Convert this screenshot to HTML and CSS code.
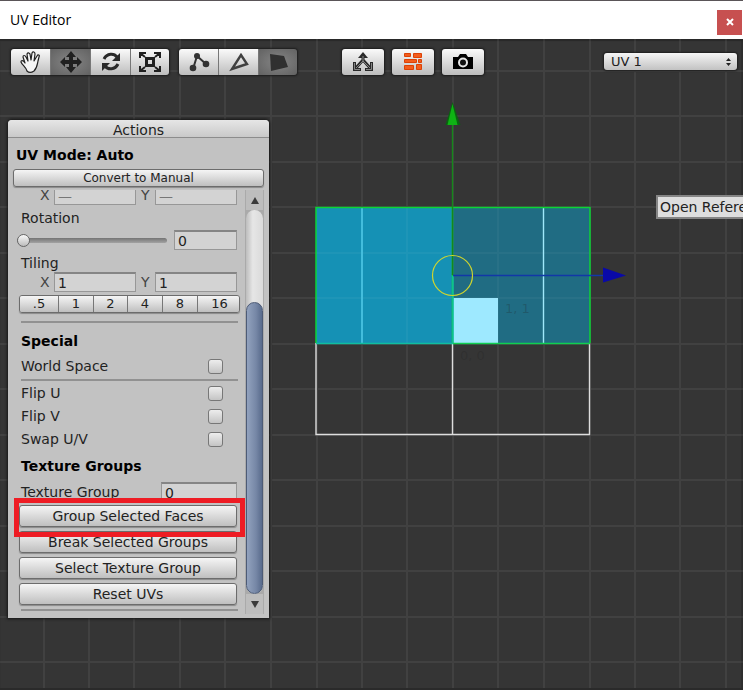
FILE: index.html
```html
<!DOCTYPE html>
<html lang="en">
<head>
<meta charset="utf-8">
<title>UV Editor</title>
<link rel="stylesheet" href="styles.css">
</head>
<body>
<header class="titlebar">
  <h1>UV Editor</h1>
  <button class="close" aria-label="Close"><svg width="8" height="8" viewBox="0 0 8 8"><path d="M1 1l6 6M7 1L1 7" stroke="#fff" stroke-width="2"/></svg></button>
</header>
<main class="workspace">
  <svg class="canvas" width="100%" height="100%" aria-hidden="true">
    <defs>
      <pattern id="grid" width="273" height="273" patternUnits="userSpaceOnUse">
        <path d="M44 0v273M89 0v273M134 0v273M180 0v273M225 0v273M271 0v273M0 71h273M0 116h273M0 162h273M0 207h273M0 253h273M0 25h273" stroke="#fff" stroke-opacity=".06" stroke-width="2"/>
      </pattern>
    </defs>
    <g transform="translate(0 -39)">
      <rect width="100%" height="200%" fill="url(#grid)"/>
      <rect x="316" y="207" width="136" height="136" fill="#1591b5"/>
      <rect x="452" y="207" width="138" height="136" fill="#206c83"/>
      <path d="M316 253h274M316 298h274M407 207v136M498 207v136" stroke="#fff" stroke-opacity=".04" stroke-width="2"/>
      <path d="M362 207v136" stroke="#43bddd" stroke-width="2"/>
      <path d="M543.500 207v136" stroke="#a0e8fb" stroke-width="1.400"/>
      <path d="M316 343v91.500h273.500V343M452.500 343v91" fill="none" stroke="#dedede" stroke-width="1.400"/>
      <rect x="453" y="298" width="45" height="45" fill="#9ee9ff"/>
      <path d="M452.500 343V207.500H316v135.500" fill="none" stroke="#0cd436" stroke-width="1.500"/>
      <path d="M452 207.500h138V343" fill="none" stroke="#0cd436" stroke-width="1.500"/>
      <path d="M316 343.500h137V276" fill="none" stroke="#10bea0" stroke-width="1.500"/>
      <path d="M453 343.500h137" stroke="#10cf50" stroke-width="1.500"/>
      <path d="M452.500 124v151" stroke="#16871b" stroke-width="1.400"/>
      <path d="M452.500 102l8 23h-15z" fill="#0a6410"/>
      <path d="M452.500 104l5 21h-10z" fill="#0eb414"/>
      <path d="M453 275.500h150" stroke="#1237a8" stroke-width="1.400"/>
      <path d="M603 267.500l23 8-23 7z" fill="#0909a8"/>
      <circle cx="452.500" cy="275.500" r="20" fill="none" stroke="#cfd52e" stroke-width="1.200"/>
      <g class="coords"><text x="505" y="313">1, 1</text><text x="460" y="360">0, 0</text></g>
    </g>
  </svg>
  <nav class="toolbar" aria-label="Tools">
    <div class="group">
      <button aria-label="Pan"><svg width="24" height="24" viewBox="0 0 24 24" fill="#f5f5f5" stroke="#222" stroke-width="1.200" stroke-linejoin="round" stroke-linecap="round"><path d="M8 21c-1-4-5-6-6-9 0-2 2-2 4 1L4 7c0-2 2-2 3 0l2 4-1-7c1-2 2-1 3 0l1 6 1-7c1-2 3-1 3 1l-1 7 3-5c1-2 3-1 2 1l-1 4c-1 5-1 7-4 10-3 2-5 2-7 0z"/></svg></button>
      <button class="on" aria-label="Move"><svg width="24" height="24" viewBox="0 0 24 24"><path d="M12 1l5 6h-3v3h4V7l5 5-5 5v-3h-4v3h3l-5 6-5-6h3v-3H6v3l-5-5 5-5v3h4V7H7z" fill="#202020"/></svg></button>
      <button aria-label="Rotate"><svg width="24" height="24" viewBox="0 0 24 24" fill="none" stroke="#292929" stroke-width="3"><path d="M5 9c3-6 10-6 13-2M19 14c-3 6-10 6-13 2"/><path d="M21 3v8h-8zM3 21v-8h8z" fill="#292929" stroke="none"/></svg></button>
      <button aria-label="Scale"><svg width="24" height="24" viewBox="0 0 24 24" fill="none" stroke="#202020" stroke-width="2"><path d="M8.500 8.500h7v7h-7z" stroke-width="3"/><path d="M2 8V3h6M16 3h6v5M22 16v5h-6M8 21H2v-5M2 3l5 4M22 3l-5 4M2 21l5-4M22 21l-5-4"/></svg></button>
    </div>
    <div class="group">
      <button aria-label="Vertex mode"><svg width="24" height="24" viewBox="0 0 24 24" fill="#333"><path d="M6 19L10 6l9 8" fill="none" stroke="#333" stroke-width="2"/><circle cx="10" cy="6" r="3"/><circle cx="6" cy="18" r="3.300"/><circle cx="19" cy="14" r="3.300"/></svg></button>
      <button aria-label="Edge mode"><svg width="24" height="24" viewBox="0 0 24 24" fill="none" stroke="#414141" stroke-width="2.400"><path d="M14 5l6 9-15 5z"/></svg></button>
      <button class="on" aria-label="Face mode"><svg width="24" height="24" viewBox="0 0 24 24"><path d="M4 4l14 2 4 11-17 4z" fill="#303030"/></svg></button>
    </div>
    <div class="actions">
      <button aria-label="Export UVs"><svg width="24" height="24" viewBox="0 0 24 24" fill="none"><g stroke="#2a2a2a" stroke-width="3"><path d="M12 5v6M12 10l-8 9M12 10l8 9"/><path d="M3.500 12v7.500H10M20.500 12v7.500H14"/></g><path d="M12 2l5 6H7z" fill="#2a2a2a"/><path d="M12 6v5l-7 7M12 11l7 7M3.500 13v6.500H9M20.500 13v6.500H15" stroke="#848484"/></svg></button>
      <button aria-label="Texture"><svg width="24" height="24" viewBox="0 0 24 24" fill="#f35d1d" stroke="#dc4206"><path d="M3.500 3.500h6v3h-6zM12.500 3.500h8v4h-8zM3.500 9.500h12v3h-12zM17.500 9.500h3v3h-3zM3.500 15.500h9v4h-9zM15.500 14.500h5v5h-5z"/></svg></button>
      <button aria-label="Screenshot"><svg width="24" height="24" viewBox="0 0 24 24"><path d="M2 7h5l2-3h6l2 3h5v12H2z" fill="#000"/><circle cx="12" cy="12.500" r="4" fill="#111" stroke="#e6e6e6" stroke-width="2"/></svg></button>
    </div>
    <div class="picker">
      <select aria-label="UV channel"><option>UV 1</option></select>
      <svg width="5" height="8" viewBox="0 0 5 8"><path d="M0 3l2.500-3L5 3zM0 5h5L2.500 8z" fill="#222"/></svg>
    </div>
  </nav>
  <section class="panel" aria-labelledby="actions-title">
    <h2 id="actions-title">Actions</h2>
    <p class="mode">UV Mode: Auto</p>
    <button class="btn convert">Convert to Manual</button>
    <div class="scroller">
      <div class="content">
        <div class="pair clipped"><label for="tx">X</label><input id="tx" value="—"><label for="ty">Y</label><input id="ty" value="—"></div>
        <label class="label" for="rot">Rotation</label>
        <div class="rotation"><input type="range" min="0" max="360" value="0" aria-label="Rotation slider"><input id="rot" value="0"></div>
        <div class="label">Tiling</div>
        <div class="pair"><label for="sx">X</label><input id="sx" value="1"><label for="sy">Y</label><input id="sy" value="1"></div>
        <div class="segments"><button>.5</button><button>1</button><button>2</button><button>4</button><button>8</button><button>16</button></div>
        <hr class="wide">
        <h3>Special</h3>
        <div class="check"><label for="ws">World Space</label><input type="checkbox" id="ws"></div>
        <hr>
        <div class="check"><label for="fu">Flip U</label><input type="checkbox" id="fu"></div>
        <div class="check"><label for="fv">Flip V</label><input type="checkbox" id="fv"></div>
        <div class="check"><label for="sw">Swap U/V</label><input type="checkbox" id="sw"></div>
        <h3>Texture Groups</h3>
        <div class="texgroup"><label for="tg">Texture Group</label><input id="tg" value="0"></div>
        <div class="stack">
          <div class="marked"><button class="btn">Group Selected Faces</button></div>
          <button class="btn">Break Selected Groups</button>
          <button class="btn">Select Texture Group</button>
          <button class="btn">Reset UVs</button>
        </div>
        <hr>
      </div>
      <div class="scrollbar" aria-hidden="true"><i class="up"></i><div class="track"><div class="thumb"></div></div><i class="down"></i></div>
    </div>
  </section>
  <div class="tooltip">Open Refere</div>
</main>
</body>
</html>
```
FILE: styles.css
```css
* { box-sizing: border-box; }
body {
  margin: 0;
  min-height: 100vh;
  display: flex;
  flex-direction: column;
  border-top: 1px solid #5a5558;
  background: #353535;
  font: 14px/18px "DejaVu Sans", sans-serif;
  color: #222;
}
button, input, select { font: inherit; color: inherit; margin: 0; padding: 0; }
h1, h2, h3, p { margin: 0; font-size: 14px; }

.titlebar {
  height: 38px;
  display: flex;
  align-items: center;
  justify-content: space-between;
  padding: 0 1px 0 10px;
  background: #fff;
}
.titlebar h1 { font: 14px/20px "Open Sans", sans-serif; color: #000; }
.close {
  width: 25px;
  height: 25px;
  margin-top: 4px;
  border: 0;
  background: #c75050;
  display: grid;
  place-items: center;
}

.workspace {
  position: relative;
  flex: 1;
  overflow: hidden;
  border: solid #2a2a2a;
  border-width: 0 0 2px;
  box-shadow: inset 0 2px 1px #292929, inset -2px 0 #2e2e2e;
}
.canvas { position: absolute; inset: 0; }
.coords { font: 13px "DejaVu Sans", sans-serif; fill: #202020; fill-opacity: .25; }

.toolbar {
  position: relative;
  display: flex;
  align-items: center;
  padding: 10px 6px 0 11px;
}
.group {
  display: flex;
  margin-right: 10px;
  border-radius: 3px;
  overflow: hidden;
  box-shadow: 0 0 2px 1px #1c1c1c;
}
.toolbar button {
  display: grid;
  place-items: center;
  height: 26px;
  border: 0;
  background: linear-gradient(#fafafa, #bdbdbd);
}
.group button { width: 40px; border-right: 1px solid #777; }
.group button:last-child { width: 38px; border: 0; }
.toolbar .on { background: radial-gradient(#858585, #626262); }
.actions { display: flex; gap: 8px; margin-left: 35px; }
.actions button { width: 42px; border-radius: 3px; box-shadow: 0 0 2px 1px #1c1c1c; }
.picker { position: relative; width: 133px; height: 18px; margin-left: auto; }
.picker select {
  appearance: none;
  display: block;
  width: 100%;
  height: 17px;
  padding-left: 7px;
  border: 0;
  border-radius: 3px;
  background: linear-gradient(#f5f5f5, #c2c2c2);
  box-shadow: 0 0 2px 1px #1c1c1c;
  font-size: 13px;
  line-height: 16px;
}
.picker svg { position: absolute; right: 6px; top: 5px; }

.panel {
  position: relative;
  display: flex;
  flex-direction: column;
  width: 261px;
  margin: 45px 0 0 8px;
  padding-bottom: 4px;
  border-radius: 4px 4px 0 0;
  background: #c2c2c2;
  box-shadow: 0 0 3px 1px #161616;
}
.panel h2 {
  height: 18px;
  border-bottom: 1px solid #8c8c8c;
  border-radius: 4px 4px 0 0;
  background: linear-gradient(#e6e6e6, #c9c9c9);
  text-align: center;
  font-weight: 400;
  line-height: 20px;
}
.mode { padding: 8px 8px 5px; font-weight: 700; color: #000; }
.btn {
  display: block;
  width: 100%;
  height: 22px;
  border: 1px solid #6c6c6c;
  border-radius: 3px;
  background: linear-gradient(#f5f5f5, #bfbfbf);
  box-shadow: 0 1px 1px #8a8a8a;
}
.convert { width: auto; height: 18px; margin: 0 5px 3px; font-size: 12px; line-height: 16px; }
.scroller { display: flex; justify-content: space-between; padding: 0 5px 0 11px; }
.content { width: 218px; }
.content input:not([type]) {
  min-width: 0;
  height: 20px;
  padding: 0 3px;
  border: 1px solid #979797;
  border-top: 2px solid #858585;
  background: #d3d3d3;
}
.pair { display: grid; grid-template-columns: 14px 82px 19px 82px; justify-content: end; align-items: center; }
.pair label { color: #444; }
.pair label:nth-of-type(2) { padding-left: 5px; }
.clipped { height: 15px; overflow: hidden; align-content: end; }
.clipped input { color: #777; }
.label { display: block; margin: 4px 2px 0; }
.rotation { display: flex; justify-content: space-between; align-items: center; margin-top: 3px; }
.rotation input:not([type]) { width: 63px; }
input[type="range"] { appearance: none; width: 150px; height: 14px; margin-left: -2px; background: none; }
input[type="range"]::-webkit-slider-runnable-track { height: 5px; border-radius: 3px; background: linear-gradient(#747474, #a2a2a2); }
input[type="range"]::-webkit-slider-thumb {
  appearance: none;
  width: 13px;
  height: 13px;
  margin-top: -4px;
  border: 1px solid #666;
  border-radius: 50%;
  background: linear-gradient(#f8f8f8, #bcbcbc);
}
.segments {
  display: grid;
  grid-template-columns: 39px 35px 34px 35px 35px 43px;
  width: 221px;
  height: 18px;
  margin-top: 3px;
  border: 1px solid #6c6c6c;
  border-radius: 3px;
  overflow: hidden;
  box-shadow: 0 1px 1px #8a8a8a;
}
.segments button { border: 0; border-right: 1px solid #777; background: linear-gradient(#f5f5f5, #bfbfbf); font-size: 13px; line-height: 16px; }
.segments button:last-child { border: 0; }
hr { width: 217px; height: 2px; margin: 4px 0 3px 2px; border: 0; background: #919191; }
.wide { margin-top: 8px; }
h3 { margin: 9px 2px 7px; color: #000; }
.check { display: flex; align-items: center; justify-content: space-between; height: 18px; margin: 0 14px 5px 2px; }
.check:has(+ hr) { margin-bottom: 4px; }
.check input {
  appearance: none;
  width: 15px;
  height: 15px;
  border: 1px solid #777;
  border-radius: 3px;
  background: linear-gradient(#ededed, #c4c4c4);
}
.texgroup { display: flex; justify-content: space-between; align-items: center; padding-left: 2px; }
.texgroup input { width: 76px; }
.stack { display: grid; gap: 4px; margin-top: 3px; }
.marked { position: relative; z-index: 1; }
.marked::after {
  content: "";
  position: absolute;
  inset: -7px -8px -10px -5px;
  border: 5px solid #ee1c24;
  pointer-events: none;
}
.scrollbar { display: flex; flex-direction: column; width: 19px; padding: 0 1px; background: #aaa; }
.scrollbar i { height: 20px; display: grid; place-items: center; background: #bdbdbd; }
.scrollbar i::before { content: ""; border: solid transparent; border-width: 0 4px; }
.scrollbar .up::before { border-bottom: 7px solid #3a3a3a; }
.scrollbar .down::before { border-top: 7px solid #3a3a3a; }
.track { flex: 1; display: flex; align-items: flex-end; border-radius: 9px; background: linear-gradient(90deg, #bdbdbd, #e6e6e6 40%, #dadada); }
.thumb { width: 100%; height: 76%; border: 1px solid #4d5b76; border-radius: 9px; background: linear-gradient(90deg, #92a2be, #7687a6 60%, #596b8c); }

.tooltip {
  position: absolute;
  top: 156px;
  left: 656px;
  right: 0;
  height: 24px;
  padding-left: 2px;
  border: 2px solid #858585;
  border-right: 0;
  background: #dedede;
  line-height: 20px;
  white-space: nowrap;
  overflow: hidden;
}
```
